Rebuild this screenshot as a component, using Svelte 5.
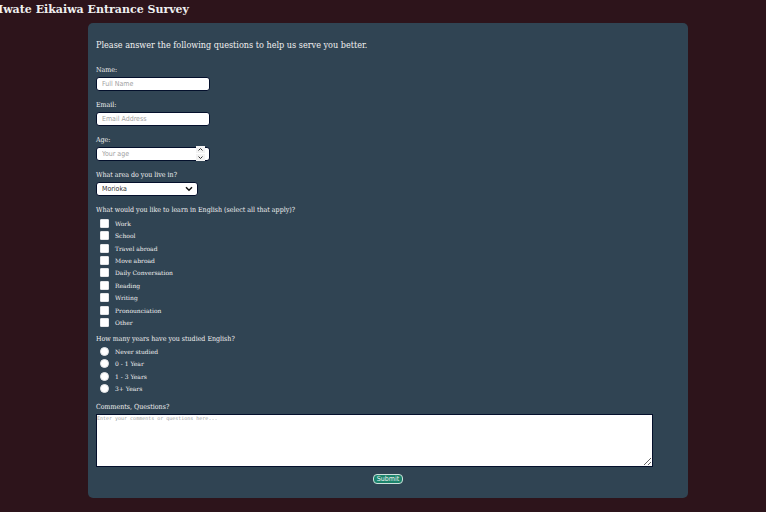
<script>
  const goals = ['Work', 'School', 'Travel abroad', 'Move abroad', 'Daily Conversation', 'Reading', 'Writing', 'Pronounciation', 'Other'];
  const years = ['Never studied', '0 - 1 Year', '1 - 3 Years', '3+ Years'];
  let age = $state(null);
  const step = (n) => (age = Math.max(0, (age ?? 0) + n));
</script>

<h1>Iwate Eikaiwa Entrance Survey</h1>
<main>
  <form onsubmit={(e) => e.preventDefault()}>
    <p class="intro">Please answer the following questions to help us serve you better.</p>

    <div class="field">
      <label for="name">Name:</label>
      <input class="box" id="name" type="text" placeholder="Full Name" />
    </div>
    <div class="field">
      <label for="email">Email:</label>
      <input class="box" id="email" type="email" placeholder="Email Address" />
    </div>
    <div class="field">
      <label for="age">Age:</label>
      <div class="number">
        <input class="box" id="age" type="number" placeholder="Your age" bind:value={age} />
        <div class="spin">
          <button type="button" aria-label="Increase age" onclick={() => step(1)}>
            <svg viewBox="0 0 8 7"><path d="M2 4.5 4 2.5 6 4.5" /></svg>
          </button>
          <button type="button" aria-label="Decrease age" onclick={() => step(-1)}>
            <svg viewBox="0 0 8 7"><path d="M2 2.5 4 4.5 6 2.5" /></svg>
          </button>
        </div>
      </div>
    </div>
    <div class="field">
      <label for="area">What area do you live in?</label>
      <div class="pick">
        <select class="box" id="area">
          <option>Morioka</option>
        </select>
        <svg viewBox="0 0 8 6"><path d="M1 1.2 4 4.2 7 1.2" /></svg>
      </div>
    </div>

    <fieldset class="goals">
      <legend>What would you like to learn in English (select all that apply)?</legend>
      <div class="options">
        {#each goals as goal}
          <label><input type="checkbox" name="goals" value={goal} /><span>{goal}</span></label>
        {/each}
      </div>
    </fieldset>

    <fieldset class="years">
      <legend>How many years have you studied English?</legend>
      <div class="options">
        {#each years as year}
          <label><input type="radio" name="years" value={year} /><span>{year}</span></label>
        {/each}
      </div>
    </fieldset>

    <div class="comments">
      <label for="comments">Comments, Questions?</label>
      <textarea id="comments" placeholder="Enter your comments or questions here..."></textarea>
    </div>
    <button class="submit" type="submit">Submit</button>
  </form>
</main>

<style>
  :global(body) {
    background: #2d141b;
    color: #f0f0f0;
    font-family: 'DejaVu Serif Condensed', 'DejaVu Serif', serif;
    overflow-x: hidden;
  }
  * {
    box-sizing: border-box;
  }
  h1 {
    margin: 0 0 0 -2px;
    padding: 3px 0 6px;
    font-family: 'DejaVu Serif', serif;
    font-size: 11px;
    line-height: 14px;
    white-space: nowrap;
  }
  main {
    padding: 0 78px 14px 88px;
  }
  form {
    display: flex;
    flex-direction: column;
    align-items: flex-start;
    padding: 15px 8px 14px;
    border-radius: 5px;
    background: #304453;
  }
  .intro {
    margin: 0 0 15px;
    font-size: 9px;
    line-height: 14px;
  }
  .field {
    display: flex;
    flex-direction: column;
    align-items: flex-start;
    gap: 3px;
    margin-bottom: 11px;
  }
  label,
  legend {
    font-size: 7px;
    line-height: 7px;
  }
  .box {
    display: block;
    width: 114px;
    height: 14px;
    padding: 0 5px;
    border: 1px solid #04102c;
    border-radius: 3px;
    background: #fff;
    color: #333;
    font: 7px/10px 'DejaVu Sans Condensed', 'DejaVu Sans', sans-serif;
    appearance: none;
  }
  ::placeholder {
    color: #a2a2a2;
    opacity: 1;
  }
  .number,
  .pick {
    position: relative;
  }
  input[type='number'] {
    appearance: textfield;
  }
  input[type='number']::-webkit-inner-spin-button {
    display: none;
  }
  .spin {
    position: absolute;
    top: -1px;
    right: 5px;
    display: flex;
    flex-direction: column;
    gap: 1px;
  }
  .spin button {
    display: block;
    width: 9px;
    height: 7px;
    padding: 0;
    border: 0;
    background: #f3f3f3;
  }
  svg {
    display: block;
    width: 100%;
    height: 100%;
    fill: none;
    stroke: #333;
  }
  select.box {
    width: 102px;
  }
  .pick svg {
    position: absolute;
    top: 4px;
    right: 5px;
    width: 8px;
    height: 6px;
    stroke: #111;
    stroke-width: 1.5;
    pointer-events: none;
  }
  fieldset {
    min-width: 0;
    margin: 0;
    padding: 0;
    border: 0;
  }
  legend {
    padding: 0;
  }
  .options {
    display: grid;
    grid-auto-rows: 1fr;
    padding-left: 4px;
  }
  .goals .options {
    min-height: 115px;
    padding-top: 3px;
  }
  .years .options {
    min-height: 52px;
    padding-top: 2px;
  }
  .goals {
    margin-bottom: 7px;
  }
  .years {
    margin-bottom: 9px;
  }
  .options label {
    display: flex;
    align-items: center;
    gap: 6px;
    font-family: 'DejaVu Serif', serif;
    font-size: 6px;
  }
  .options input {
    width: 9px;
    height: 9px;
    margin: 0;
    border: 1px solid #e4e6e8;
    border-radius: 1px;
    background: #fff;
    appearance: none;
  }
  .options input[type='radio'] {
    border-radius: 50%;
  }
  .options input:checked {
    background: #2b8a6f;
  }
  .comments {
    display: flex;
    flex-direction: column;
    gap: 3px;
    align-self: stretch;
    padding-right: 27px;
  }
  textarea {
    display: block;
    width: 100%;
    height: 53px;
    padding: 0;
    border: 1px solid #04102c;
    border-radius: 0;
    color: #333;
    font: 5px/6px 'DejaVu Sans Mono', monospace;
  }
  .submit {
    align-self: center;
    margin-top: 7px;
    padding: 0 3px;
    border: 1px solid #cfe0dc;
    border-radius: 4px;
    background: #1d846c;
    color: #f0f0f0;
    font: 7px/8px 'DejaVu Sans Condensed', 'DejaVu Sans', sans-serif;
  }
</style>
